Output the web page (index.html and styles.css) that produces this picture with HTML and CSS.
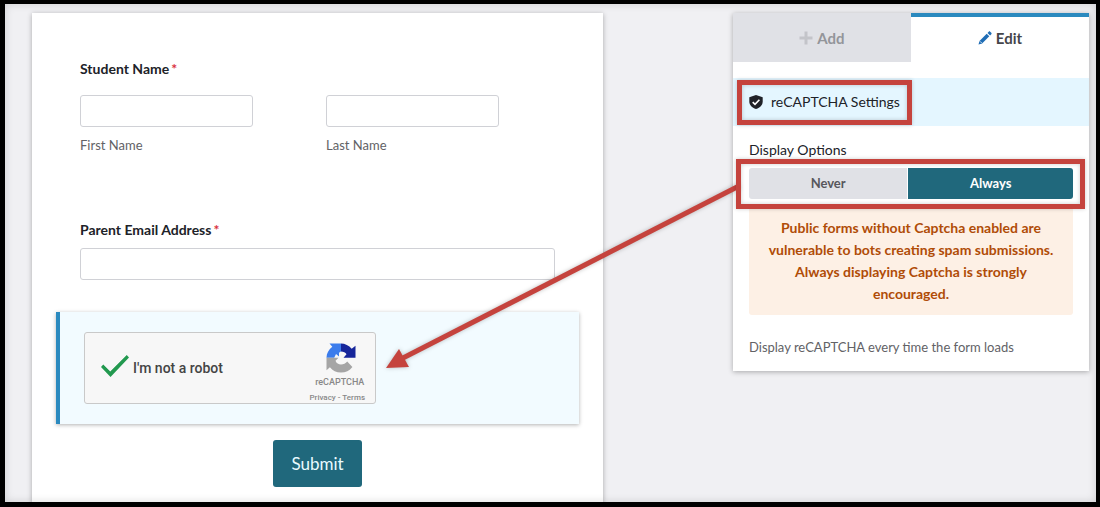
FILE: index.html
```html
<!DOCTYPE html>
<html lang="en">

<head>
    <meta charset="UTF-8">
    <meta name="viewport" content="width=device-width, initial-scale=1.0">
    <title>Form Builder</title>
    <link rel="stylesheet" href="styles.css">
</head>

<body>
    <div class="page">
        <form class="form-card">
            <fieldset class="name-group">
                <legend class="field-label">Student Name<span class="required">*</span></legend>
                <div class="name-row">
                    <div class="name-field">
                        <input type="text" class="text-input" id="firstName" name="firstName">
                        <label class="sub-label" for="firstName">First Name</label>
                    </div>
                    <div class="name-field">
                        <input type="text" class="text-input" id="lastName" name="lastName">
                        <label class="sub-label" for="lastName">Last Name</label>
                    </div>
                </div>
            </fieldset>

            <div class="email-group">
                <label class="field-label" for="email">Parent Email Address<span class="required">*</span></label>
                <input type="email" class="text-input" id="email" name="email">
            </div>

            <div class="captcha-field">
                <div class="captcha-box">
                    <input type="checkbox" class="captcha-check" id="notRobot" checked>
                    <label class="captcha-label" for="notRobot">I'm not a robot</label>
                    <div class="captcha-brand">
                        <svg class="captcha-logo" viewBox="0 0 30 30" aria-hidden="true">
                            <path fill="#3b7cec" d="M15 0.500H3.500L6.300 3.800C2.700 6.500 0.500 10.500 0.500 14.700H8.200L10 11L13 13.500V9.800C14 8.800 15 8.500 15 8.500Z" />
                            <path fill="#16259a" d="M15 0.500C19 0.500 23 2.500 25.700 5.800L29.500 2.800V14.700H17.500L20.500 11.300C19.500 9.500 17.500 8.500 15 8.500Z" />
                            <path fill="#a5a5a5" d="M0.500 14.700H12.500L9.500 17.700C10.400 20.200 12.500 21.500 15 21.500C17.500 21.500 19.600 20.500 21.200 18.500L26.400 23.900C23.600 27.500 19.600 29.500 15 29.500C10.500 29.500 6.500 27.600 3.900 24.200L0.500 27.300Z" />
                        </svg>
                        <span class="captcha-name">reCAPTCHA</span>
                        <span class="captcha-links"><a href="#">Privacy</a> - <a href="#">Terms</a></span>
                    </div>
                </div>
            </div>

            <button type="submit" class="submit-button">Submit</button>
        </form>

        <aside class="panel">
            <div class="tabs">
                <button type="button" class="tab">
                    <svg class="icon-plus" viewBox="0 0 14 14" aria-hidden="true">
                        <path fill="currentColor" d="M5.500 0.500h3v5h5v3h-5v5h-3v-5h-5v-3h5z" />
                    </svg>
                    Add
                </button>
                <button type="button" class="tab tab-active">
                    <svg class="icon-pencil" viewBox="0 0 14 14" aria-hidden="true">
                        <path fill="currentColor" d="M0.500 13.500L1.500 9.900L8.700 2.700L11.300 5.300L4.100 12.500ZM9.500 1.900L10.700 0.700C11.200 0.200 11.700 0.200 12.200 0.700L13.300 1.800C13.800 2.300 13.800 2.800 13.300 3.300L12.100 4.500Z" />
                        <path stroke="#fff" stroke-width="0.800" d="M2 10.300L3.700 12" />
                    </svg>
                    Edit
                </button>
            </div>

            <div class="settings-header">
                <h2 class="settings-title">
                    <svg class="icon-shield" viewBox="0 0 14 14" aria-hidden="true">
                        <path fill="currentColor" d="M7 0L13.700 2.200V6.500C13.700 10 11.200 12.800 7 14C2.800 12.800 0.300 10 0.300 6.500V2.200Z" />
                        <path fill="none" stroke="#fff" stroke-width="1.600" d="M3.700 7.200L6 9.400L10.400 4.800" />
                    </svg>
                    reCAPTCHA Settings
                </h2>
            </div>

            <div class="settings-body">
                <fieldset class="options">
                    <legend class="options-label">Display Options</legend>
                    <div class="toggle">
                        <input type="radio" class="toggle-input" name="display" id="never">
                        <label class="toggle-option" for="never">Never</label>
                        <input type="radio" class="toggle-input" name="display" id="always" checked>
                        <label class="toggle-option" for="always">Always</label>
                        <!-- arrow from the toggle to the captcha field -->
                        <svg class="arrow" viewBox="0 0 360 200" aria-hidden="true">
                            <path stroke="#c5433d" stroke-width="5" d="M358 9L20 182" />
                            <path fill="#c5433d" d="M5 191L18 172L28 190Z" />
                        </svg>
                    </div>
                </fieldset>
                <p class="warning">Public forms without Captcha enabled are vulnerable to bots creating spam submissions. Always displaying Captcha is strongly encouraged.</p>
                <p class="hint">Display reCAPTCHA every time the form loads</p>
            </div>
        </aside>
    </div>
</body>

</html>
```

FILE: styles.css
```css
* {
    box-sizing: border-box;
}

body {
    margin: 0;
    font-family: Lato, "Liberation Sans", sans-serif;
    font-size: 14px;
    line-height: 20px;
    color: #202228;
}

h2,
p,
fieldset {
    margin: 0;
    padding: 0;
    border: 0;
}

legend {
    padding: 0;
}

button {
    border: 0;
    font-family: inherit;
}

.page {
    position: relative;
    display: flex;
    align-items: flex-start;
    gap: 130px;
    height: 100vh;
    padding: 9px 7px 0 27px;
    border: 5px solid #000;
    border-top-width: 4px;
    border-right-width: 4px;
    background-color: #f0f0f3;
    overflow: hidden;
}

/* soft edge inside the black frame */
.page::after {
    content: "";
    position: absolute;
    inset: 0;
    box-shadow: inset 0 0 8px rgba(0, 0, 0, 0.15);
    pointer-events: none;
}

.form-card {
    flex: 1;
    min-height: 100%;
    padding: 46px 48px 16px;
    background-color: #fff;
    box-shadow: 0 1px 5px rgba(0, 0, 0, 0.3);
}

.field-label {
    display: block;
    font-weight: 700;
}

.required {
    margin-left: 2px;
    color: #d9303e;
}

.name-row {
    display: flex;
    gap: 73px;
    margin-top: 16px;
}

.name-field {
    width: 173px;
}

.text-input {
    display: block;
    width: 100%;
    height: 32px;
    padding: 0 8px;
    border: 1px solid #d0d1d6;
    border-radius: 3px;
    background-color: #fff;
    font: inherit;
}

.sub-label {
    display: block;
    margin-top: 8px;
    color: #626266;
    font-size: 13px;
}

.email-group {
    margin-top: 65px;
}

.email-group .text-input {
    margin-top: 8px;
}

.captcha-field {
    margin: 32px -24px 16px;
    padding: 20px 24px;
    border-left: 4px solid #2b8abf;
    background-color: #f2fbff;
    box-shadow: 0 1px 4px rgba(0, 0, 0, 0.3);
}

.captcha-box {
    display: flex;
    align-items: center;
    width: 292px;
    height: 72px;
    padding: 0 10px 0 16px;
    border: 1px solid #c9c9c9;
    border-radius: 3px;
    background-color: #f7f7f7;
    font-family: Roboto, "Liberation Sans", sans-serif;
    color: #444;
}

.captcha-check {
    appearance: none;
    width: 28px;
    height: 22px;
    margin: 0 4px 4px 0;
    border: 1px solid #c1c1c1;
}

.captcha-check:checked {
    border: 0;
    background-color: #22994f;
    clip-path: polygon(0 54%, 8% 43%, 33% 75%, 92% 0, 100% 11%, 34% 100%);
}

.captcha-label {
    flex: 1;
    font-weight: 500;
}

.captcha-brand {
    display: flex;
    flex-direction: column;
    align-items: center;
    padding-top: 10px;
    font-size: 9px;
    line-height: 13px;
    color: #888;
}

.captcha-logo {
    width: 30px;
    height: 30px;
    margin-left: 7px;
}

.captcha-name {
    margin: 3px 0 2px 5px;
    font-weight: 500;
}

.captcha-links {
    font-size: 8px;
    font-weight: 500;
}

.captcha-links a {
    color: inherit;
    text-decoration: none;
}

.submit-button {
    display: block;
    height: 47px;
    margin: 0 auto;
    padding: 0 18px;
    border-radius: 3px;
    background-color: #20687c;
    color: #e9fbff;
    font-size: 17px;
}

.panel {
    width: 356px;
    background-color: #fff;
    box-shadow: 0 1px 5px rgba(0, 0, 0, 0.3);
}

.tabs {
    display: flex;
    margin-bottom: 16px;
}

.tab {
    display: flex;
    flex: 1;
    align-items: center;
    justify-content: center;
    gap: 4px;
    height: 49px;
    padding: 0;
    background-color: #e0e1e6;
    color: #93959a;
    font-size: 15px;
    font-weight: 700;
}

.tab-active {
    border-top: 4px solid #2b8abf;
    padding-bottom: 4px;
    background-color: #fff;
    color: #45454a;
}

.icon-plus,
.icon-pencil,
.icon-shield {
    width: 14px;
    height: 14px;
}

.icon-plus {
    color: #c3c4c9;
}

.icon-pencil {
    color: #1f6db5;
}

.settings-header {
    padding: 2px 4px 1px;
    background-color: #e4f6ff;
}

.settings-title {
    display: flex;
    align-items: center;
    gap: 8px;
    width: max-content;
    height: 45px;
    padding: 0 7px 1px;
    border: 5px solid #c5433d;
    box-shadow: 0 0 4px rgba(0, 0, 0, 0.2), inset 0 0 4px rgba(0, 0, 0, 0.2);
    font-size: 14px;
    font-weight: 400;
}

.settings-body {
    padding: 14px 16px;
}

.options-label {
    color: #202228;
}

.toggle {
    position: relative;
    display: flex;
    gap: 1px;
    height: 31px;
    margin-top: 8px;
}

/* callout frame around the toggle */
.toggle::after {
    content: "";
    position: absolute;
    inset: -9px -12px -10px -13px;
    border: 5px solid #c5433d;
    box-shadow: 0 0 4px rgba(0, 0, 0, 0.2), inset 0 0 4px rgba(0, 0, 0, 0.2);
    pointer-events: none;
}

.toggle-input {
    position: absolute;
    opacity: 0;
}

.toggle-option {
    flex: auto;
    border-radius: 3px 0 0 3px;
    background-color: #e0e1e6;
    color: #57575c;
    font-size: 13px;
    font-weight: 700;
    line-height: 31px;
    text-align: center;
}

#always + .toggle-option {
    border-radius: 0 3px 3px 0;
}

.toggle-input:checked + .toggle-option {
    background-color: #20687c;
    color: #fff;
}

.arrow {
    position: absolute;
    top: 9px;
    right: calc(100% + 8px);
    width: 360px;
    height: 200px;
    filter: drop-shadow(0 0 2px rgba(0, 0, 0, 0.25));
    pointer-events: none;
}

.warning {
    margin-top: 8px;
    padding: 10px 16px;
    border-radius: 3px;
    background-color: #fdf0e5;
    color: #b04c07;
    font-weight: 700;
    line-height: 22px;
    text-align: center;
}

.hint {
    margin-top: 22px;
    color: #626266;
    font-size: 13px;
}
```
